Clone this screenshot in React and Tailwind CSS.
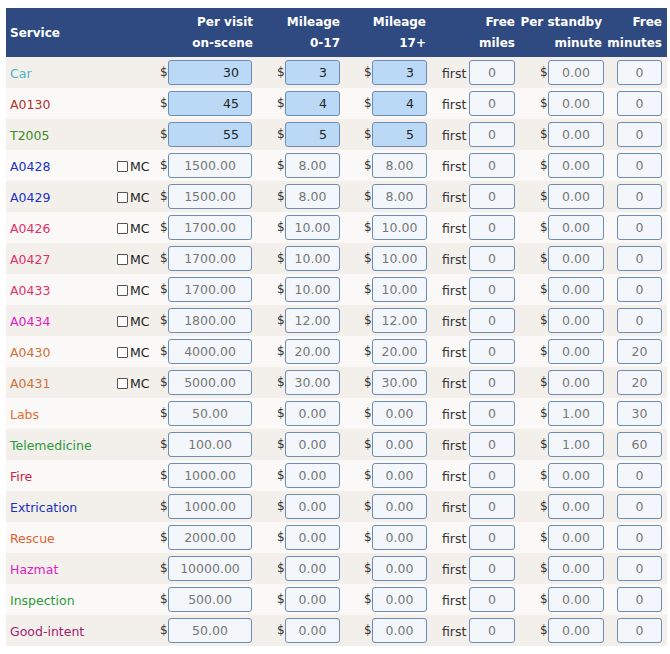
const rows = [
  ['Car', 'text-[#4db6bf]', false, '30', '3', '3', '0', '0.00', '0', true],
  ['A0130', 'text-[#b0352a]', false, '45', '4', '4', '0', '0.00', '0', true],
  ['T2005', 'text-[#3b8a22]', false, '55', '5', '5', '0', '0.00', '0', true],
  ['A0428', 'text-[#2030c8]', true, '1500.00', '8.00', '8.00', '0', '0.00', '0'],
  ['A0429', 'text-[#2030c8]', true, '1500.00', '8.00', '8.00', '0', '0.00', '0'],
  ['A0426', 'text-[#e0306a]', true, '1700.00', '10.00', '10.00', '0', '0.00', '0'],
  ['A0427', 'text-[#e0306a]', true, '1700.00', '10.00', '10.00', '0', '0.00', '0'],
  ['A0433', 'text-[#e0306a]', true, '1700.00', '10.00', '10.00', '0', '0.00', '0'],
  ['A0434', 'text-[#e020c0]', true, '1800.00', '12.00', '12.00', '0', '0.00', '0'],
  ['A0430', 'text-[#d0703a]', true, '4000.00', '20.00', '20.00', '0', '0.00', '20'],
  ['A0431', 'text-[#d0703a]', true, '5000.00', '30.00', '30.00', '0', '0.00', '20'],
  ['Labs', 'text-[#e07030]', false, '50.00', '0.00', '0.00', '0', '1.00', '30'],
  ['Telemedicine', 'text-[#2a9a3a]', false, '100.00', '0.00', '0.00', '0', '1.00', '60'],
  ['Fire', 'text-[#d02040]', false, '1000.00', '0.00', '0.00', '0', '0.00', '0'],
  ['Extrication', 'text-[#2030c0]', false, '1000.00', '0.00', '0.00', '0', '0.00', '0'],
  ['Rescue', 'text-[#e06030]', false, '2000.00', '0.00', '0.00', '0', '0.00', '0'],
  ['Hazmat', 'text-[#e020c0]', false, '10000.00', '0.00', '0.00', '0', '0.00', '0'],
  ['Inspection', 'text-[#2a9a3a]', false, '500.00', '0.00', '0.00', '0', '0.00', '0'],
  ['Good-intent', 'text-[#a02070]', false, '50.00', '0.00', '0.00', '0', '0.00', '0'],
]

function Box({ value, w, blue }) {
  const cls = blue
    ? 'bg-[#b9d9f6] text-[#222] text-right pr-[12px]'
    : 'bg-[#f3f7fb] text-[#777] text-center'
  return (
    <div className={`${w} h-[25px] border border-[#6f8db3] rounded-[3px] leading-[23px] ${cls}`}>{value}</div>
  )
}

function Dollar() {
  return <span className="w-[8px] text-[#333] text-[12px]">$</span>
}

export default function App() {
  return (
    <div className="pt-[8px] pl-[6px] text-[12.5px]" style={{ fontFamily: '"DejaVu Sans", Verdana, sans-serif' }}>
      <div className="w-[661px]">
        <div className="h-[49px] bg-[#2f4a80] text-white font-bold flex items-stretch text-[12px]">
          <div className="w-[154px] pl-[4px] flex items-center">Service</div>
          <div className="w-[93px] text-right leading-[21px] pt-[4px]">Per visit<br />on-scene</div>
          <div className="w-[87px] text-right leading-[21px] pt-[4px]">Mileage<br />0-17</div>
          <div className="w-[87px] text-right leading-[21px] pt-[4px] pr-[1px]">Mileage<br />17+</div>
          <div className="w-[88px] text-right leading-[21px] pt-[4px]">Free<br />miles</div>
          <div className="w-[87px] text-right leading-[21px] pt-[4px]">Per standby<br />minute</div>
          <div className="w-[60px] text-right leading-[21px] pt-[4px]">Free<br />minutes</div>
        </div>
        {rows.map(([name, color, mc, a, b, c, d, e, f, blue], i) => (
          <div key={name} className={`h-[31px] flex items-center leading-[25px] ${i % 2 === 0 ? 'bg-[#f3f0ec]' : 'bg-[#faf9f7]'}`}>
            <div className={`w-[108px] pl-[4px] pt-[2px] ${color}`}>{name}</div>
            <div className="w-[46px] flex items-center pt-[2px]">
              {mc && (
                <>
                  <span className="ml-[3px] w-[11px] h-[11px] border border-[#555] bg-white rounded-[1px]" />
                  <span className="ml-[2px] text-[#222]">MC</span>
                </>
              )}
            </div>
            <Dollar />
            <Box value={a} w="w-[84px]" blue={blue} />
            <div className="w-[25px]" />
            <Dollar />
            <Box value={b} w="w-[55px]" blue={blue} />
            <div className="w-[24px]" />
            <Dollar />
            <Box value={c} w="w-[55px]" blue={blue} />
            <div className="w-[15px]" />
            <span className="w-[27px] text-[#333] pt-[2px]">first</span>
            <Box value={d} w="w-[46px]" />
            <div className="w-[25px]" />
            <Dollar />
            <Box value={e} w="w-[56px]" />
            <div className="w-[13px]" />
            <Box value={f} w="w-[45px]" />
          </div>
        ))}
      </div>
    </div>
  )
}
